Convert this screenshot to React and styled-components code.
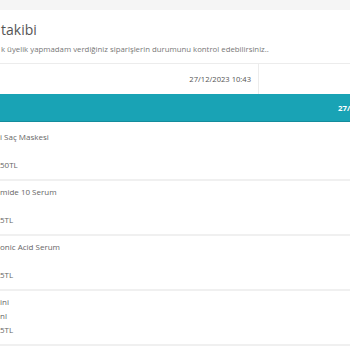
import React from 'react'
import styled, { createGlobalStyle } from 'styled-components'

const GlobalStyle = createGlobalStyle`
  html, body {
    margin: 0;
    padding: 0;
    background: #fff;
    font-family: "Open Sans", "Liberation Sans", sans-serif;
    overflow: hidden;
  }
`

const Page = styled.div`
  width: 350px;
  height: 350px;
  overflow: hidden;
  background: #f5f5f5;
  padding-top: 10px;
  box-sizing: border-box;
`

const Card = styled.div`
  background: #fff;
  height: 100%;
`

const Head = styled.div`
  padding: 10px 0 7px 1px;
  border-bottom: 1px solid #ececec;
`

const Title = styled.h2`
  margin: 0;
  font-size: 14px;
  font-weight: 400;
  line-height: 20px;
  color: #555;
`

const Subtitle = styled.p`
  margin: 2px 0 0;
  font-size: 7.8px;
  line-height: 14px;
  color: #777;
  white-space: nowrap;
`

const InfoRow = styled.div`
  display: flex;
  height: 30px;
`

const InfoCell = styled.div`
  width: ${p => p.$w}px;
  flex: ${p => (p.$w ? 'none' : '1')};
  display: flex;
  align-items: center;
  justify-content: flex-end;
  padding-right: 7px;
  box-sizing: border-box;
  border-right: ${p => (p.$w ? '1px solid #ececec' : 'none')};
  font-size: 7.6px;
  color: #555;
`

const Bar = styled.div`
  height: 27px;
  background: #19a3b5;
  border-bottom: 1px solid #138c9c;
  display: flex;
  align-items: center;
  padding-left: 338px;
  overflow: hidden;
  white-space: nowrap;
  font-size: 7.8px;
  font-weight: 700;
  color: #fff;
`

const Item = styled.div`
  padding: ${p => (p.$first ? '8px' : '4px')} 0 7px;
  border-bottom: 2px solid #f0f0f0;
`

const Line = styled.div`
  font-size: 8px;
  line-height: 14px;
  height: 14px;
  color: #666;
  white-space: nowrap;
`

const items = [
  ['i Saç Maskesi', '', '50TL'],
  ['mide 10 Serum', '', '5TL'],
  ['onic Acid Serum', '', '5TL'],
  ['ini', 'nl', '5TL'],
]

export default function App() {
  return (
    <Page>
      <GlobalStyle />
      <Card>
        <Head>
          <Title>takibi</Title>
          <Subtitle>k üyelik yapmadam verdiğiniz siparişlerin durumunu kontrol edebilirsiniz..</Subtitle>
        </Head>
        <InfoRow>
          <InfoCell $w={259}>27/12/2023 10:43</InfoCell>
          <InfoCell />
        </InfoRow>
        <Bar>27/12/2023 10:43</Bar>
        {items.map((lines, i) => (
          <Item key={i} $first={i === 0}>
            {lines.map((t, j) => (
              <Line key={j}>{t}</Line>
            ))}
          </Item>
        ))}
      </Card>
    </Page>
  )
}
